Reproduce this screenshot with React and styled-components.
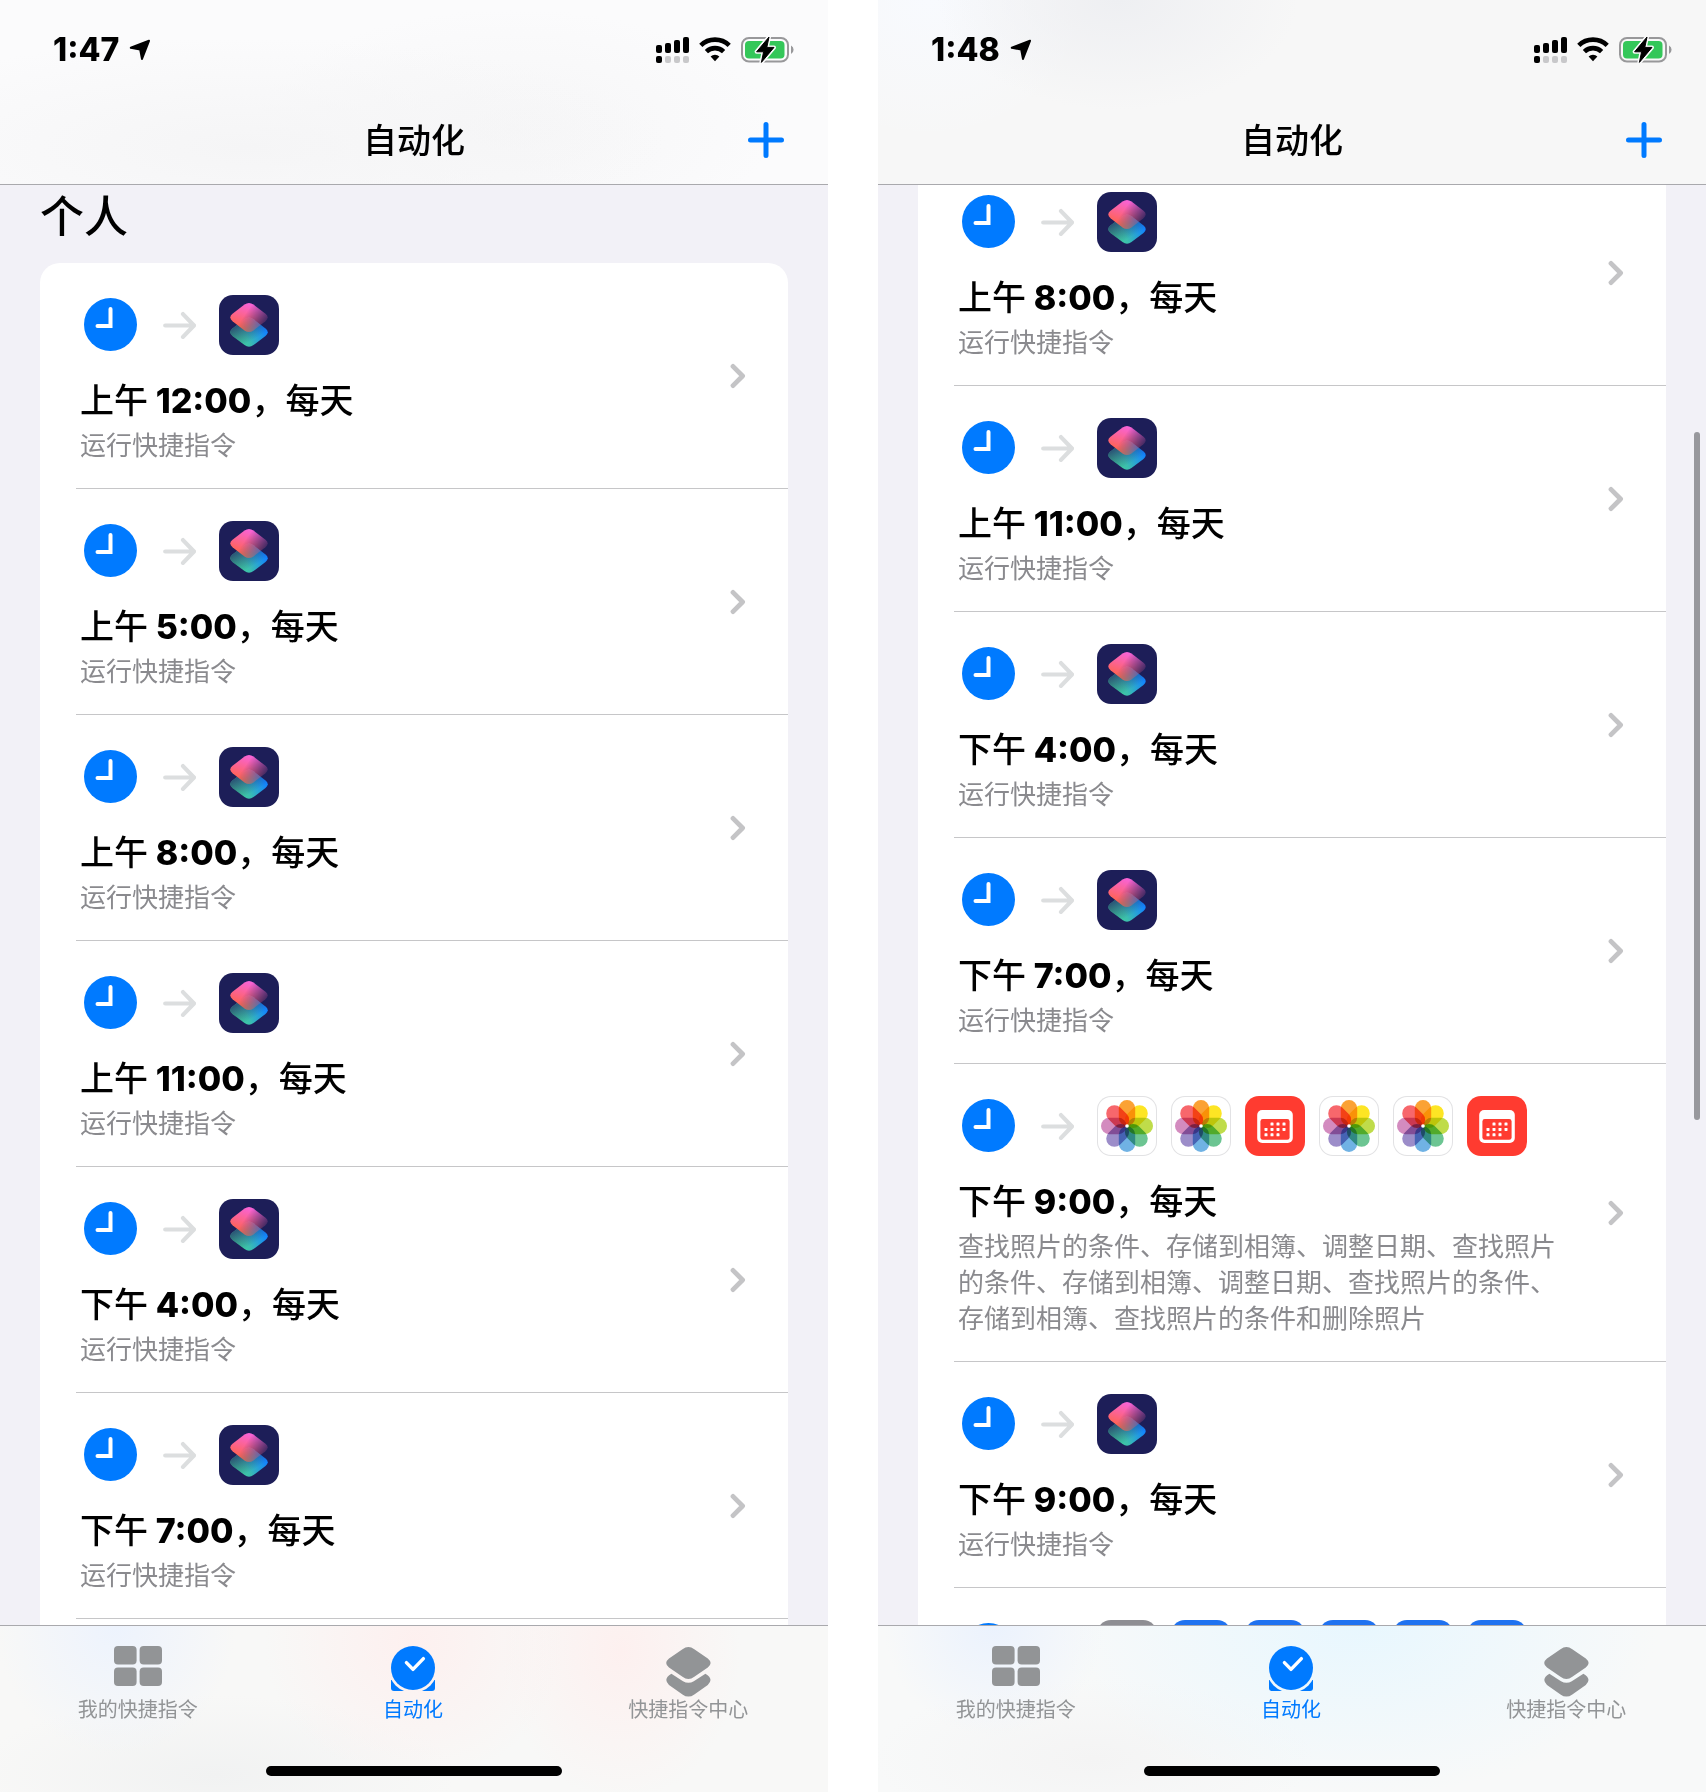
import React from "react";
import styled, { createGlobalStyle } from "styled-components";

const GlobalStyle = createGlobalStyle`
  * { box-sizing: border-box; }
  body {
    margin: 0;
    background: #ffffff;
    font-family: Inter, "Noto Sans CJK SC", sans-serif;
    color: #000000;
  }
`;

/* ---------- layout ---------- */

const Page = styled.main`
  display: grid;
  grid-template-columns: 1fr 1fr;
  gap: 50px;
  height: 100vh;
`;

const Screen = styled.section`
  display: flex;
  flex-direction: column;
  min-width: 0;
  height: 100%;
  background: #f2f1f7;
  overflow: hidden;
`;

const headerTints = {
  plain: `radial-gradient(ellipse 420px 110px at 30% 80%, #f5f5f6, transparent),
    radial-gradient(ellipse 260px 120px at 62% 70%, #f6f6f7, transparent),
    #fbfbfc`,
  gray: `radial-gradient(ellipse 180px 110px at 29% 0%, #eeeff2, transparent),
    radial-gradient(ellipse 160px 140px at 6% 0%, #f8fafe, transparent),
    #f7f7f7`,
};

const Header = styled.header`
  flex: none;
  padding-top: 20px;
  border-bottom: 1px solid #a9a9ad;
  background: ${(p) => headerTints[p.$tint]};
`;

const StatusBar = styled.div`
  display: flex;
  align-items: center;
  justify-content: space-between;
  height: 60px;
  padding: 0 34px 0 53px;
`;

const StatusGroup = styled.div`
  display: flex;
  align-items: center;
  gap: 10px;
`;

const Time = styled.time`
  font-size: 32px;
  line-height: 40px;
  font-weight: 800;
`;

const NavBar = styled.div`
  display: grid;
  grid-template-columns: 1fr auto 1fr;
  align-items: center;
  height: 88px;
  margin-top: 16px;
  padding: 0 44px;
`;

const NavTitle = styled.h1`
  grid-column: 2;
  margin: 0;
  padding-top: 2px;
  font-size: 34px;
  line-height: 44px;
  font-weight: 500;
`;

const AddButton = styled.button`
  display: flex;
  justify-self: end;
  padding: 0;
  border: 0;
  background: none;
  cursor: pointer;
`;

const Viewport = styled.div`
  position: relative;
  display: flex;
  flex-direction: column;
  flex: 1;
  min-height: 0;
  padding: 0 40px;
  overflow: hidden;
`;

const ScrollThumb = styled.div`
  position: absolute;
  top: 247px;
  right: 6px;
  width: 6px;
  height: 688px;
  border-radius: 3px;
  background: #98989d;
`;

const SectionTitle = styled.h2`
  flex: none;
  margin: 0 0 14px;
  font-size: 44px;
  line-height: 64px;
  font-weight: 500;
`;

const Card = styled.ul`
  flex: 1 0 auto;
  margin: ${(p) => (p.$scrolled ? "-25px" : "0")} 0 0;
  padding: 0;
  list-style: none;
  background: #ffffff;
  border-radius: ${(p) => (p.$scrolled ? "0" : "20px 20px 0 0")};
`;

const Row = styled.li`
  margin-left: 36px;
  border-bottom: 1px solid #c6c6c8;
`;

const RowLink = styled.a`
  display: flex;
  align-items: center;
  gap: 32px;
  padding: 0 42px 0 4px;
  color: inherit;
  text-decoration: none;
`;

const RowBody = styled.div`
  flex: 1;
  min-width: 0;
  padding: 32px 0 24px;
`;

const Flow = styled.div`
  display: flex;
  align-items: center;
  height: 60px;
  padding-left: 4px;
`;

const FlowArrow = styled.span`
  display: flex;
  margin: 0 23px 0 26px;
`;

const Apps = styled.span`
  display: flex;
  gap: 14px;
`;

const RowTitle = styled.h3`
  margin: 22px 0 0;
  font-family: "Noto Sans CJK SC", sans-serif;
  font-size: 34px;
  line-height: 44px;
  font-weight: 500;
`;

const Hour = styled.span`
  font-family: Inter, sans-serif;
  line-height: 1;
  font-weight: 800;
`;

const RowText = styled.p`
  margin: 7px 0 0;
  font-size: 26px;
  line-height: 36px;
  color: #8a8a8e;
`;

const AppTile = styled.span`
  display: flex;
  width: 60px;
  height: 60px;
  border-radius: 14px;
  background: ${(p) => p.$color};
  box-shadow: ${(p) => (p.$outlined ? "inset 0 0 0 1px #e2e2e4" : "none")};
  overflow: hidden;
`;

const tabTints = {
  warm: `radial-gradient(ellipse 120px 130px at 14% 0%, #edf3fd, transparent),
    radial-gradient(ellipse 150px 140px at 50% 10%, #fdf0ef, transparent),
    radial-gradient(ellipse 120px 150px at 75% 15%, #fdf0ef, transparent),
    radial-gradient(ellipse 240px 80px at 26% 90%, #f1f2f2, transparent),
    #f8f8f7`,
  cool: `radial-gradient(ellipse 110px 110px at 14% 0%, #ebf2fd, transparent),
    radial-gradient(ellipse 300px 170px at 58% 0%, #e8f7fe, transparent),
    radial-gradient(ellipse 220px 80px at 26% 80%, #f4f4f4, transparent),
    #f8f9f9`,
};

const BottomBar = styled.footer`
  flex: none;
  display: flex;
  flex-direction: column;
  align-items: center;
  padding-bottom: 16px;
  border-top: 1px solid #a9a9ad;
  background: ${(p) => tabTints[p.$tint]};
`;

const Tabs = styled.nav`
  display: grid;
  grid-template-columns: repeat(3, 1fr);
  width: 100%;
  padding: 20px 2px 0 0;
`;

const Tab = styled.button`
  display: flex;
  flex-direction: column;
  align-items: center;
  padding: 0;
  border: 0;
  background: none;
  font-family: inherit;
  font-size: 20px;
  line-height: 24px;
  color: ${(p) => (p.$active ? "#007aff" : "#929496")};
  cursor: pointer;
`;

const TabIcon = styled.span`
  display: flex;
  height: 52px;
`;

const HomeIndicator = styled.div`
  width: 296px;
  height: 10px;
  margin-top: 44px;
  border-radius: 5px;
  background: #000000;
`;

/* ---------- drawings ---------- */

const LocationIcon = () => (
  <svg width="22" height="22" viewBox="0 0 22 22">
    <path d="M20 1.8L1.8 8.8L11.2 10.6L13 20Z" stroke="#000" strokeWidth="2" strokeLinejoin="round" />
  </svg>
);

const SignalIcon = () => (
  <svg width="33" height="26" viewBox="0 0 33 26">
    <rect x="0" y="8" width="6" height="8" rx="2" />
    <rect x="9" y="6" width="6" height="10" rx="2" />
    <rect x="18" y="3" width="6" height="13" rx="2" />
    <rect x="27" y="0" width="6" height="16" rx="2" />
    <rect x="0" y="19" width="6" height="7" rx="2" />
    <g fill="#c8c8ca">
      <rect x="9" y="19" width="6" height="7" rx="2" />
      <rect x="18" y="19" width="6" height="7" rx="2" />
      <rect x="27" y="19" width="6" height="7" rx="2" />
    </g>
  </svg>
);

const WifiIcon = () => (
  <svg width="32" height="26" viewBox="0 0 32 26" fill="none" stroke="#000" strokeWidth="4.6">
    <path d="M1.8 8.4A20.4 20.4 0 0 1 30.2 8.4" />
    <path d="M7.4 14.6A12.4 12.4 0 0 1 24.6 14.6" />
    <path d="M16 24.2L11.6 19.6A6.4 6.4 0 0 1 20.4 19.6Z" fill="#000" stroke="none" />
  </svg>
);

const BatteryIcon = () => (
  <svg width="53" height="26" viewBox="0 0 53 26">
    <rect x="1" y="1" width="46" height="23.5" rx="7" fill="none" stroke="#98989a" strokeWidth="2" />
    <rect x="4" y="4" width="39.5" height="17.5" rx="4" fill="#34c759" />
    <path d="M50 8.5A4.8 4.8 0 0 1 50 17Z" fill="#98989a" />
    <path
      d="M28 0L25.8 10.4H33L20.4 25.4L22.6 14.8H15.6Z"
      stroke="#fbfbfc"
      strokeWidth="4"
      strokeLinejoin="round"
    />
    <path d="M28 0L25.8 10.4H33L20.4 25.4L22.6 14.8H15.6Z" stroke="#000" strokeWidth="1" strokeLinejoin="round" />
  </svg>
);

const PlusIcon = () => (
  <svg width="36" height="36" viewBox="0 0 36 36" stroke="#007aff" strokeWidth="5" strokeLinecap="round">
    <path d="M18 2.5V33.5M2.5 18H33.5" />
  </svg>
);

const ClockIcon = () => (
  <svg width="53" height="54" viewBox="0 0 53 54">
    <circle cx="26.5" cy="26.5" r="26.5" fill="#007aff" />
    <path d="M26.5 11V28H13.5" fill="none" stroke="#fff" strokeWidth="4" strokeLinecap="round" />
  </svg>
);

const ArrowIcon = () => (
  <svg width="33" height="28" viewBox="0 0 33 28" fill="none" stroke="#dcdedf" strokeWidth="4.2" strokeLinecap="round" strokeLinejoin="round">
    <path d="M2.2 14.5H30.5M20 3.1L31 14.5L20 25.9" />
  </svg>
);

const ChevronIcon = () => (
  <svg width="16" height="26" viewBox="0 0 16 26" fill="none" stroke="#c4c4c6" strokeWidth="4.8" strokeLinecap="round" strokeLinejoin="round">
    <path d="M3 3.4L12.6 13L3 22.6" />
  </svg>
);

const ShortcutsArt = () => (
  <svg width="60" height="60" viewBox="0 0 60 60">
    <defs>
      <linearGradient id="lower" gradientUnits="userSpaceOnUse" x1="18" y1="48" x2="46" y2="34">
        <stop offset="0" stopColor="#3fcf9b" />
        <stop offset="0.35" stopColor="#3cbfae" />
        <stop offset="1" stopColor="#1283ff" />
      </linearGradient>
      <linearGradient id="lowerShade" gradientUnits="userSpaceOnUse" x1="16" y1="30" x2="27" y2="49">
        <stop offset="0" stopColor="#26366a" stopOpacity="0.85" />
        <stop offset="1" stopColor="#26366a" stopOpacity="0" />
      </linearGradient>
      <linearGradient id="upper" gradientUnits="userSpaceOnUse" x1="30" y1="8" x2="22" y2="32">
        <stop offset="0" stopColor="#f863da" />
        <stop offset="1" stopColor="#ff6352" />
      </linearGradient>
      <linearGradient id="upperFade" gradientUnits="userSpaceOnUse" x1="27" y1="18" x2="46" y2="31">
        <stop offset="0" stopColor="#fff" />
        <stop offset="1" stopColor="#fff" stopOpacity="0.1" />
      </linearGradient>
      <mask id="upperMask" maskUnits="userSpaceOnUse" x="0" y="0" width="60" height="60">
        <rect width="60" height="60" fill="url(#upperFade)" />
      </mask>
    </defs>
    <path
      d="M25.5 24.3Q30 20.9 34.5 24.3L46.5 33.5Q51 37.2 46.5 40.9L34.5 50.1Q30 53.5 25.5 50.1L13.5 40.9Q9 37.2 13.5 33.5Z"
      fill="url(#lower)"
    />
    <path
      d="M25.5 24.3Q30 20.9 34.5 24.3L46.5 33.5Q51 37.2 46.5 40.9L34.5 50.1Q30 53.5 25.5 50.1L13.5 40.9Q9 37.2 13.5 33.5Z"
      fill="url(#lowerShade)"
    />
    <path
      d="M25.5 9.6Q30 6.2 34.5 9.6L46.5 18.8Q51 22.5 46.5 26.2L34.5 35.4Q30 38.8 25.5 35.4L13.5 26.2Q9 22.5 13.5 18.8Z"
      fill="url(#upper)"
      mask="url(#upperMask)"
    />
  </svg>
);

const petals = ["#fba234", "#fde524", "#bfdc4a", "#6cc592", "#70b2e4", "#9c8dc9", "#d38bbf", "#f7676c"];

const Petal = styled.rect`
  mix-blend-mode: multiply;
`;

const PhotosArt = () => (
  <svg width="60" height="60" viewBox="0 0 60 60">
    {petals.map((color, i) => (
      <Petal
        key={color}
        x="21.8"
        y="4"
        width="16.4"
        height="25.6"
        rx="8.2"
        fill={color}
        transform={`rotate(${i * 45} 30 30)`}
      />
    ))}
    <circle cx="30" cy="30" r="1.8" fill="#fff" />
  </svg>
);

const calendarDots = [
  [27, 28], [33, 28], [39, 28],
  [21, 33.4], [27, 33.4], [33, 33.4], [39, 33.4],
  [21, 38.8], [27, 38.8], [33, 38.8],
];

const CalendarArt = () => (
  <svg width="60" height="60" viewBox="0 0 60 60">
    <rect x="12.2" y="14" width="35.6" height="33" rx="5" fill="#fff" />
    <rect x="15.4" y="23" width="29.2" height="20.8" rx="2.4" fill="#ff3b30" />
    {calendarDots.map(([x, y]) => (
      <rect key={`${x}-${y}`} x={x - 1.5} y={y - 1.5} width="3" height="3" rx="0.6" fill="#fff" />
    ))}
  </svg>
);

const GridIcon = () => (
  <svg width="48" height="40" viewBox="0 0 48 40" fill="currentColor">
    <rect x="0" y="0" width="22.6" height="18.4" rx="4" />
    <rect x="25.6" y="0" width="22.4" height="18.4" rx="4" />
    <rect x="0" y="21.6" width="22.6" height="18.4" rx="4" />
    <rect x="25.6" y="21.6" width="22.4" height="18.4" rx="4" />
  </svg>
);

const AutomationIcon = () => (
  <svg width="44" height="45" viewBox="0 0 44 45">
    <mask id="baseCut" maskUnits="userSpaceOnUse" x="0" y="0" width="44" height="45">
      <rect width="44" height="45" fill="#fff" />
      <circle cx="22" cy="22" r="24.6" fill="#000" />
    </mask>
    <path d="M0 34H44V42Q44 45 41 45H3Q0 45 0 42Z" fill="currentColor" mask="url(#baseCut)" />
    <circle cx="22" cy="22" r="22" fill="currentColor" />
    <path d="M15.4 16.6L22 23.4L32.4 12.6" fill="none" stroke="#fff" strokeWidth="3.4" strokeLinecap="round" strokeLinejoin="round" />
  </svg>
);

const GalleryIcon = () => (
  <svg width="45" height="51" viewBox="0 0 45 51" fill="currentColor">
    <path d="M16.5 3.2Q22.4 -1.2 28.3 3.2L41.8 12.4Q47.4 17 41.8 21.6L28.3 30.8Q22.4 35.2 16.5 30.8L3 21.6Q-2.6 17 3 12.4Z" />
    <path d="M5.4 27.8L17 35.2Q22.4 38.4 27.8 35.2L39.4 27.8Q48.2 33 41.8 39L28.3 48.4Q22.4 52.8 16.5 48.4L3 39Q-3.4 33 5.4 27.8Z" />
  </svg>
);

/* ---------- composed parts ---------- */

const appKinds = {
  shortcuts: { color: "#1d1e58", Art: ShortcutsArt },
  photos: { color: "#ffffff", Art: PhotosArt, outlined: true },
  calendar: { color: "#ff3b30", Art: CalendarArt },
  gray: { color: "#8e8e93" },
  blue: { color: "#1f72f0" },
};

function AppIcon({ kind }) {
  const { color, Art, outlined } = appKinds[kind];
  return (
    <AppTile $color={color} $outlined={outlined}>
      {Art && <Art />}
    </AppTile>
  );
}

function AutomationRow({ period, hour, text, apps = ["shortcuts"] }) {
  return (
    <Row>
      <RowLink href="#">
        <RowBody>
          <Flow>
            <ClockIcon />
            <FlowArrow>
              <ArrowIcon />
            </FlowArrow>
            <Apps>
              {apps.map((kind, i) => (
                <AppIcon key={i} kind={kind} />
              ))}
            </Apps>
          </Flow>
          {hour && (
            <RowTitle>
              {period} <Hour>{hour}</Hour>，每天
            </RowTitle>
          )}
          {text && <RowText>{text}</RowText>}
        </RowBody>
        <ChevronIcon />
      </RowLink>
    </Row>
  );
}

const tabs = [
  { label: "我的快捷指令", Icon: GridIcon },
  { label: "自动化", Icon: AutomationIcon, active: true },
  { label: "快捷指令中心", Icon: GalleryIcon },
];

function Phone({ time, headerTint, tabTint, children }) {
  return (
    <Screen>
      <Header $tint={headerTint}>
        <StatusBar>
          <StatusGroup>
            <Time>{time}</Time>
            <LocationIcon />
          </StatusGroup>
          <StatusGroup>
            <SignalIcon />
            <WifiIcon />
            <BatteryIcon />
          </StatusGroup>
        </StatusBar>
        <NavBar>
          <NavTitle>自动化</NavTitle>
          <AddButton aria-label="添加">
            <PlusIcon />
          </AddButton>
        </NavBar>
      </Header>
      <Viewport>{children}</Viewport>
      <BottomBar $tint={tabTint}>
        <Tabs>
          {tabs.map(({ label, Icon, active }) => (
            <Tab key={label} $active={active}>
              <TabIcon>
                <Icon />
              </TabIcon>
              {label}
            </Tab>
          ))}
        </Tabs>
        <HomeIndicator />
      </BottomBar>
    </Screen>
  );
}

const run = "运行快捷指令";

const topRows = [
  { period: "上午", hour: "12:00", text: run },
  { period: "上午", hour: "5:00", text: run },
  { period: "上午", hour: "8:00", text: run },
  { period: "上午", hour: "11:00", text: run },
  { period: "下午", hour: "4:00", text: run },
  { period: "下午", hour: "7:00", text: run },
];

const scrolledRows = [
  { period: "上午", hour: "8:00", text: run },
  { period: "上午", hour: "11:00", text: run },
  { period: "下午", hour: "4:00", text: run },
  { period: "下午", hour: "7:00", text: run },
  {
    period: "下午",
    hour: "9:00",
    text: "查找照片的条件、存储到相簿、调整日期、查找照片的条件、存储到相簿、调整日期、查找照片的条件、存储到相簿、查找照片的条件和删除照片",
    apps: ["photos", "photos", "calendar", "photos", "photos", "calendar"],
  },
  { period: "下午", hour: "9:00", text: run },
  { apps: ["gray", "blue", "blue", "blue", "blue", "blue"] },
];

export default function App() {
  return (
    <>
      <GlobalStyle />
      <Page lang="zh-CN">
        <Phone time="1:47" headerTint="plain" tabTint="warm">
          <SectionTitle>个人</SectionTitle>
          <Card>
            {topRows.map((row, i) => (
              <AutomationRow key={i} {...row} />
            ))}
          </Card>
        </Phone>
        <Phone time="1:48" headerTint="gray" tabTint="cool">
          <Card $scrolled>
            {scrolledRows.map((row, i) => (
              <AutomationRow key={i} {...row} />
            ))}
          </Card>
          <ScrollThumb />
        </Phone>
      </Page>
    </>
  );
}
